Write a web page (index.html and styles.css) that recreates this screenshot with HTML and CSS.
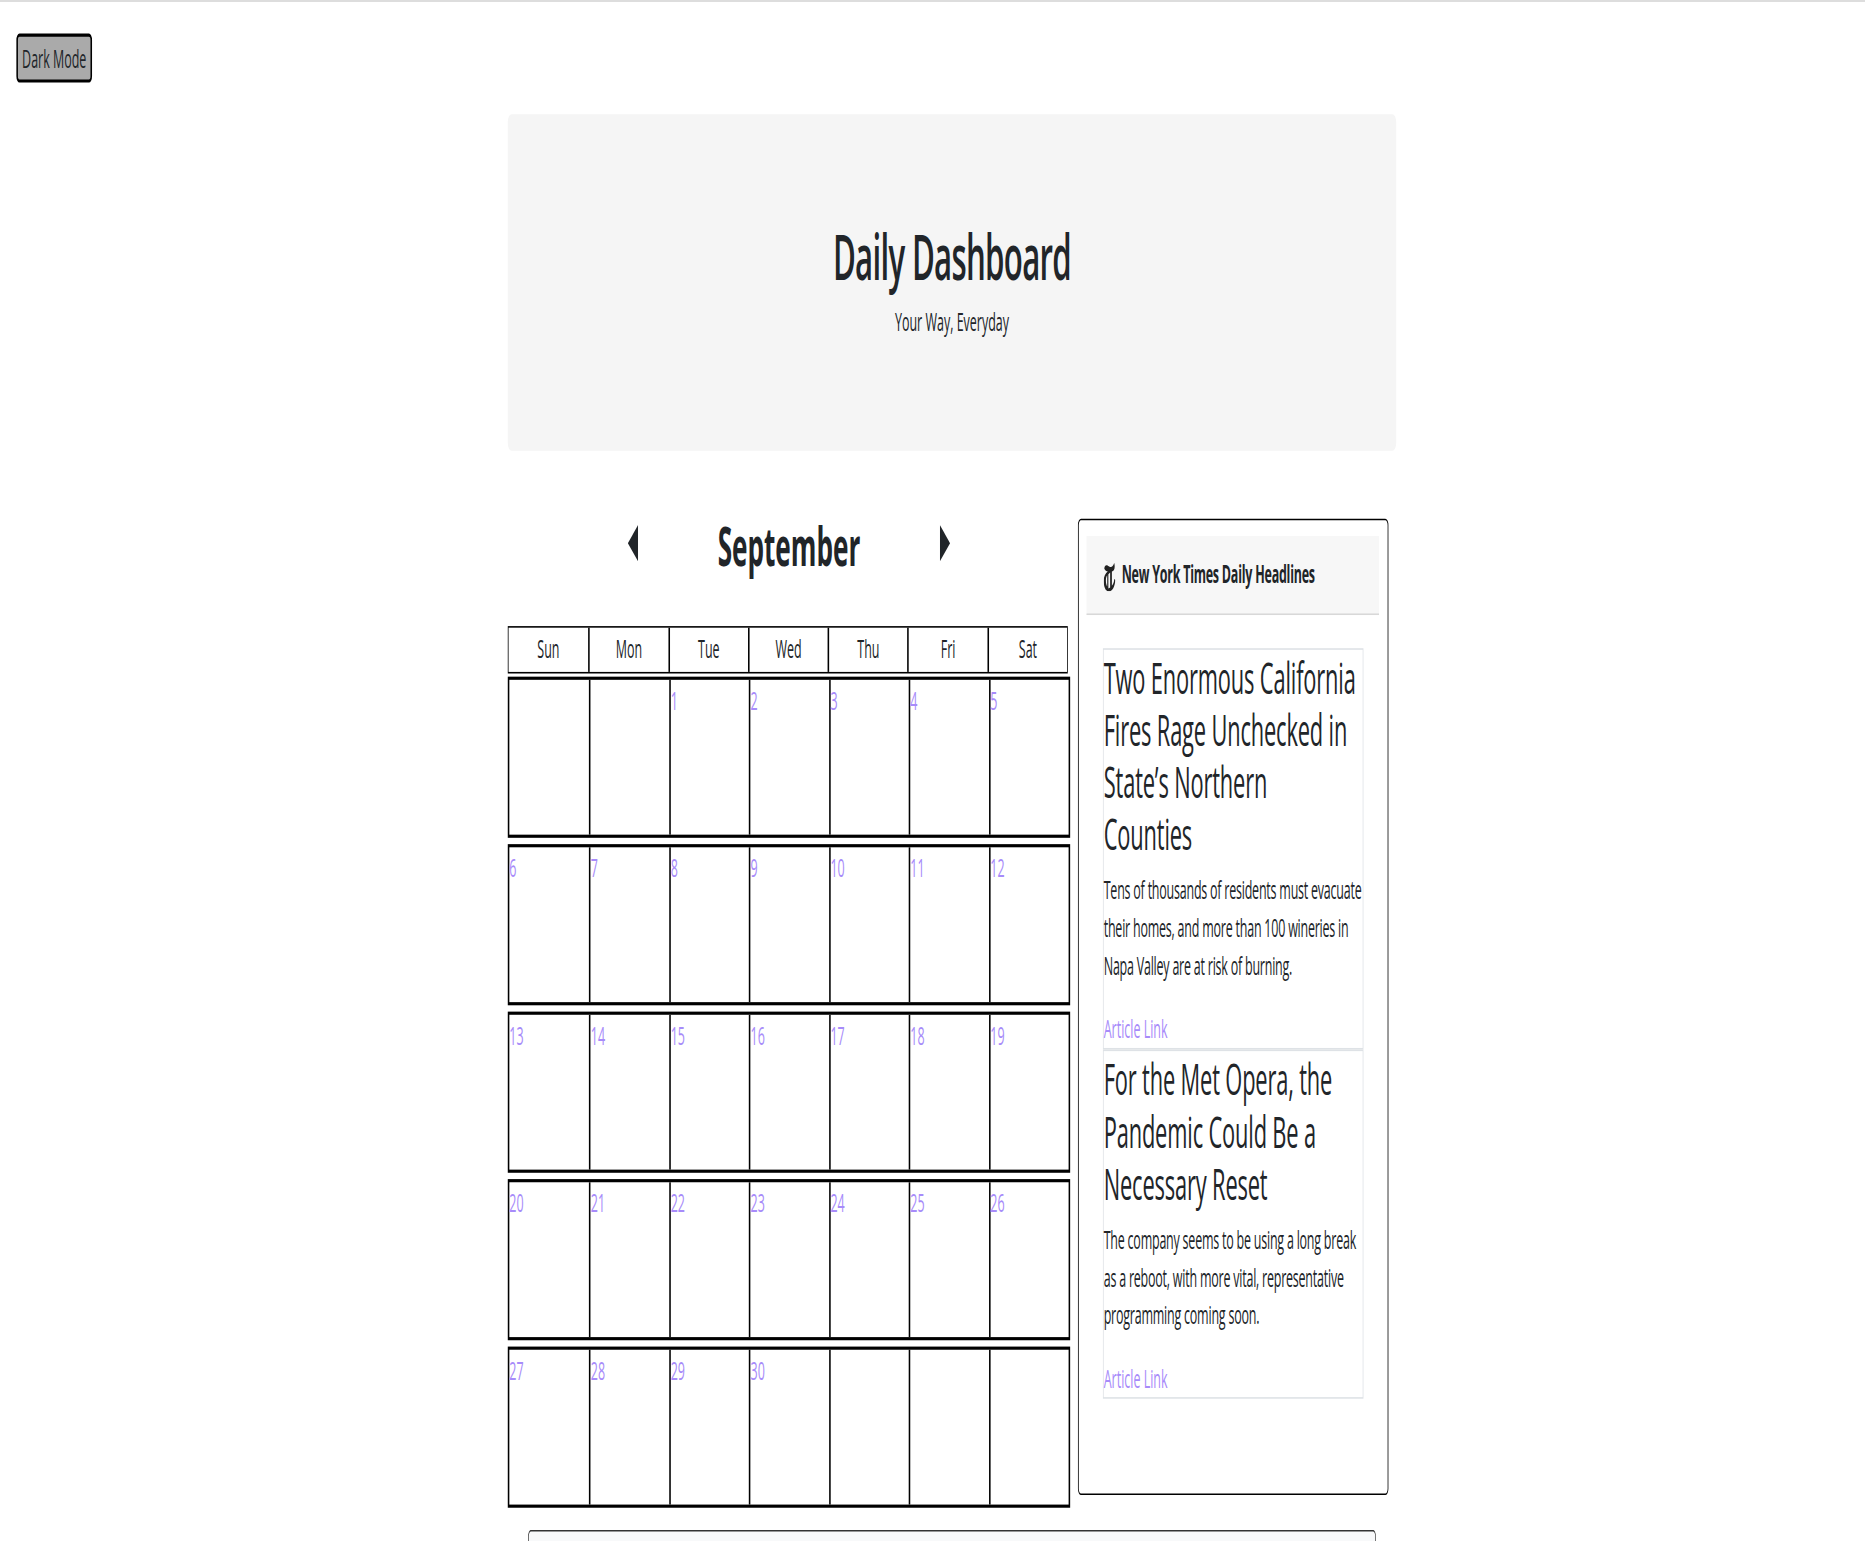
FILE: index.html
```html
<!DOCTYPE html>
<html lang="en">
<head>
  <meta charset="UTF-8" />
  <title>Daily Dashboard</title>
  <link rel="stylesheet" href="styles.css">
</head>
<body>
  <div class="page">
    <button class="mode-btn">Dark Mode</button>

    <main class="container">
      <header class="jumbotron">
        <h1>Daily Dashboard</h1>
        <p>Your Way, Everyday</p>
      </header>

      <div class="columns">
        <section class="calendar">
          <div class="month">
            <svg class="caret" viewBox="0 0 10 24" preserveAspectRatio="none"><path d="M10 0 L0 12 L10 24 Z" /></svg>
            <h2>September</h2>
            <svg class="caret" viewBox="0 0 10 24" preserveAspectRatio="none"><path d="M0 0 L10 12 L0 24 Z" /></svg>
          </div>

          <div class="weekdays">
            <div>Sun</div><div>Mon</div><div>Tue</div><div>Wed</div><div>Thu</div><div>Fri</div><div>Sat</div>
          </div>

          <div class="week">
            <div class="day"></div><div class="day"></div>
            <div class="day"><a href="#">1</a></div><div class="day"><a href="#">2</a></div>
            <div class="day"><a href="#">3</a></div><div class="day"><a href="#">4</a></div>
            <div class="day"><a href="#">5</a></div>
          </div>
          <div class="week">
            <div class="day"><a href="#">6</a></div><div class="day"><a href="#">7</a></div>
            <div class="day"><a href="#">8</a></div><div class="day"><a href="#">9</a></div>
            <div class="day"><a href="#">10</a></div><div class="day"><a href="#">11</a></div>
            <div class="day"><a href="#">12</a></div>
          </div>
          <div class="week">
            <div class="day"><a href="#">13</a></div><div class="day"><a href="#">14</a></div>
            <div class="day"><a href="#">15</a></div><div class="day"><a href="#">16</a></div>
            <div class="day"><a href="#">17</a></div><div class="day"><a href="#">18</a></div>
            <div class="day"><a href="#">19</a></div>
          </div>
          <div class="week">
            <div class="day"><a href="#">20</a></div><div class="day"><a href="#">21</a></div>
            <div class="day"><a href="#">22</a></div><div class="day"><a href="#">23</a></div>
            <div class="day"><a href="#">24</a></div><div class="day"><a href="#">25</a></div>
            <div class="day"><a href="#">26</a></div>
          </div>
          <div class="week">
            <div class="day"><a href="#">27</a></div><div class="day"><a href="#">28</a></div>
            <div class="day"><a href="#">29</a></div><div class="day"><a href="#">30</a></div>
            <div class="day"></div><div class="day"></div><div class="day"></div>
          </div>
        </section>

        <aside class="news">
          <div class="news-header">
            <svg class="nyt" viewBox="0 0 20 30" preserveAspectRatio="none">
              <path d="M1 6 C2 1 6 2 10 4 C13 5 16 4 18 0 C20 5 18 9 14 9 L14 24 C16 23 18 20 18 17 L20 18 C19 25 15 30 9 30 C3 30 0 25 0 19 C0 14 3 11 7 9 C5 9 2 8 1 6 Z M6 13 C3 15 3 22 6 25 Z M8 12 L8 27 L11 26 L11 10 Z" fill-rule="evenodd" />
            </svg>
            <span>New York Times Daily Headlines</span>
          </div>

          <div class="articles">
            <article class="article">
              <h3>Two Enormous California Fires Rage Unchecked in State’s Northern Counties</h3>
              <p>Tens of thousands of residents must evacuate their homes, and more than 100 wineries in Napa Valley are at risk of burning.</p>
              <a href="#">Article Link</a>
            </article>
            <article class="article">
              <h3>For the Met Opera, the Pandemic Could Be a Necessary Reset</h3>
              <p>The company seems to be using a long break as a reboot, with more vital, representative programming coming soon.</p>
              <a href="#">Article Link</a>
            </article>
          </div>
        </aside>
      </div>

      <div class="bottom-box"></div>
    </main>
  </div>
</body>
</html>
```

FILE: styles.css
```css
* {
  box-sizing: border-box;
}
html, body {
  margin: 0;
  height: 100%;
  overflow: hidden;
  background: #fff;
}
body {
  border-top: 2px solid #ddd;
}
/* the shot is stretched: narrow in x, tall in y */
.page {
  width: 1865px;
  height: 974px;
  overflow: hidden;
  transform: scale(0.78, 1.58);
  transform-origin: 0 0;
  font-family: "Open Sans", "Noto Sans", sans-serif;
  font-size: 16px;
  line-height: 24px;
  color: #212529;
}
.mode-btn {
  display: block;
  margin: 20px 0 0 21px;
  width: 97px;
  height: 31px;
  padding: 0;
  border: 2px solid #000;
  border-radius: 4px;
  background: #aaa;
  font: inherit;
  color: #212529;
}
.container {
  width: 1139px;
  margin: 20px 0 0 651px;
}
.jumbotron {
  height: 213px;
  padding-top: 66px;
  background: #f5f5f5;
  border-radius: 5px;
  text-align: center;
}
.jumbotron h1 {
  margin: 0 0 5px;
  font-size: 40px;
  line-height: 48px;
  font-weight: 600;
  letter-spacing: -0.9px;
}
.jumbotron p {
  margin: 0;
}
.columns {
  display: flex;
  gap: 10px;
  margin-top: 43px;
}
.calendar {
  width: 721px;
}
.month {
  display: flex;
  align-items: flex-start;
  justify-content: center;
  gap: 102px;
  height: 68px;
}
.month h2 {
  margin: 0;
  font-size: 33.5px;
  line-height: 35px;
  font-weight: 700;
}
.caret {
  width: 13px;
  height: 23px;
  margin-top: 3.5px;
  fill: #212529;
}
.weekdays {
  display: grid;
  grid-template-columns: repeat(7, 1fr);
  width: 718px;
  height: 30px;
  border: 1px solid #000;
  line-height: 26px;
}
.weekdays div {
  text-align: center;
  border-left: 2px solid #000;
}
.weekdays div:first-child {
  border-left: 0;
}
.week {
  display: grid;
  grid-template-columns: repeat(7, 1fr);
  height: 102px;
  margin-top: 2px;
  margin-bottom: 4px;
  border: 2px solid #000;
}
.day {
  border-left: 2px solid #000;
  padding-top: 1px;
}
.day:first-child {
  border-left: 0;
}
a {
  color: #a78bfa;
  text-decoration: none;
}
.news {
  width: 398px;
  height: 618px;
  padding: 10px 11px 0 10px;
  border: 1px solid #000;
  border-radius: 4px;
}
.news-header {
  display: flex;
  align-items: center;
  gap: 8px;
  height: 50px;
  padding: 0 0 1px 22px;
  background: #f7f7f7;
  border-bottom: 1px solid #d8d8d8;
  font-size: 16px;
  font-weight: 700;
  letter-spacing: -0.3px;
}
.nyt {
  width: 15px;
  height: 18px;
  margin-top: 4px;
  fill: #222;
}
.articles {
  padding: 21px 20px 0 21px;
}
.article {
  border: 1px solid #dee2e6;
  padding-top: 1px;
}
.article h3 {
  margin: 0 4px 6.5px 0;
  font-size: 28px;
  line-height: 33px;
  font-weight: 500;
  letter-spacing: -0.2px;
}
.article p {
  margin: 0 0 16.5px;
  letter-spacing: -0.28px;
}
.bottom-box {
  width: 1087px;
  height: 8px;
  margin: 9.5px 0 0 26px;
  border: 1px solid #333;
  border-bottom: 0;
  border-radius: 4px 4px 0 0;
  background: #f8f9fa;
}
```
